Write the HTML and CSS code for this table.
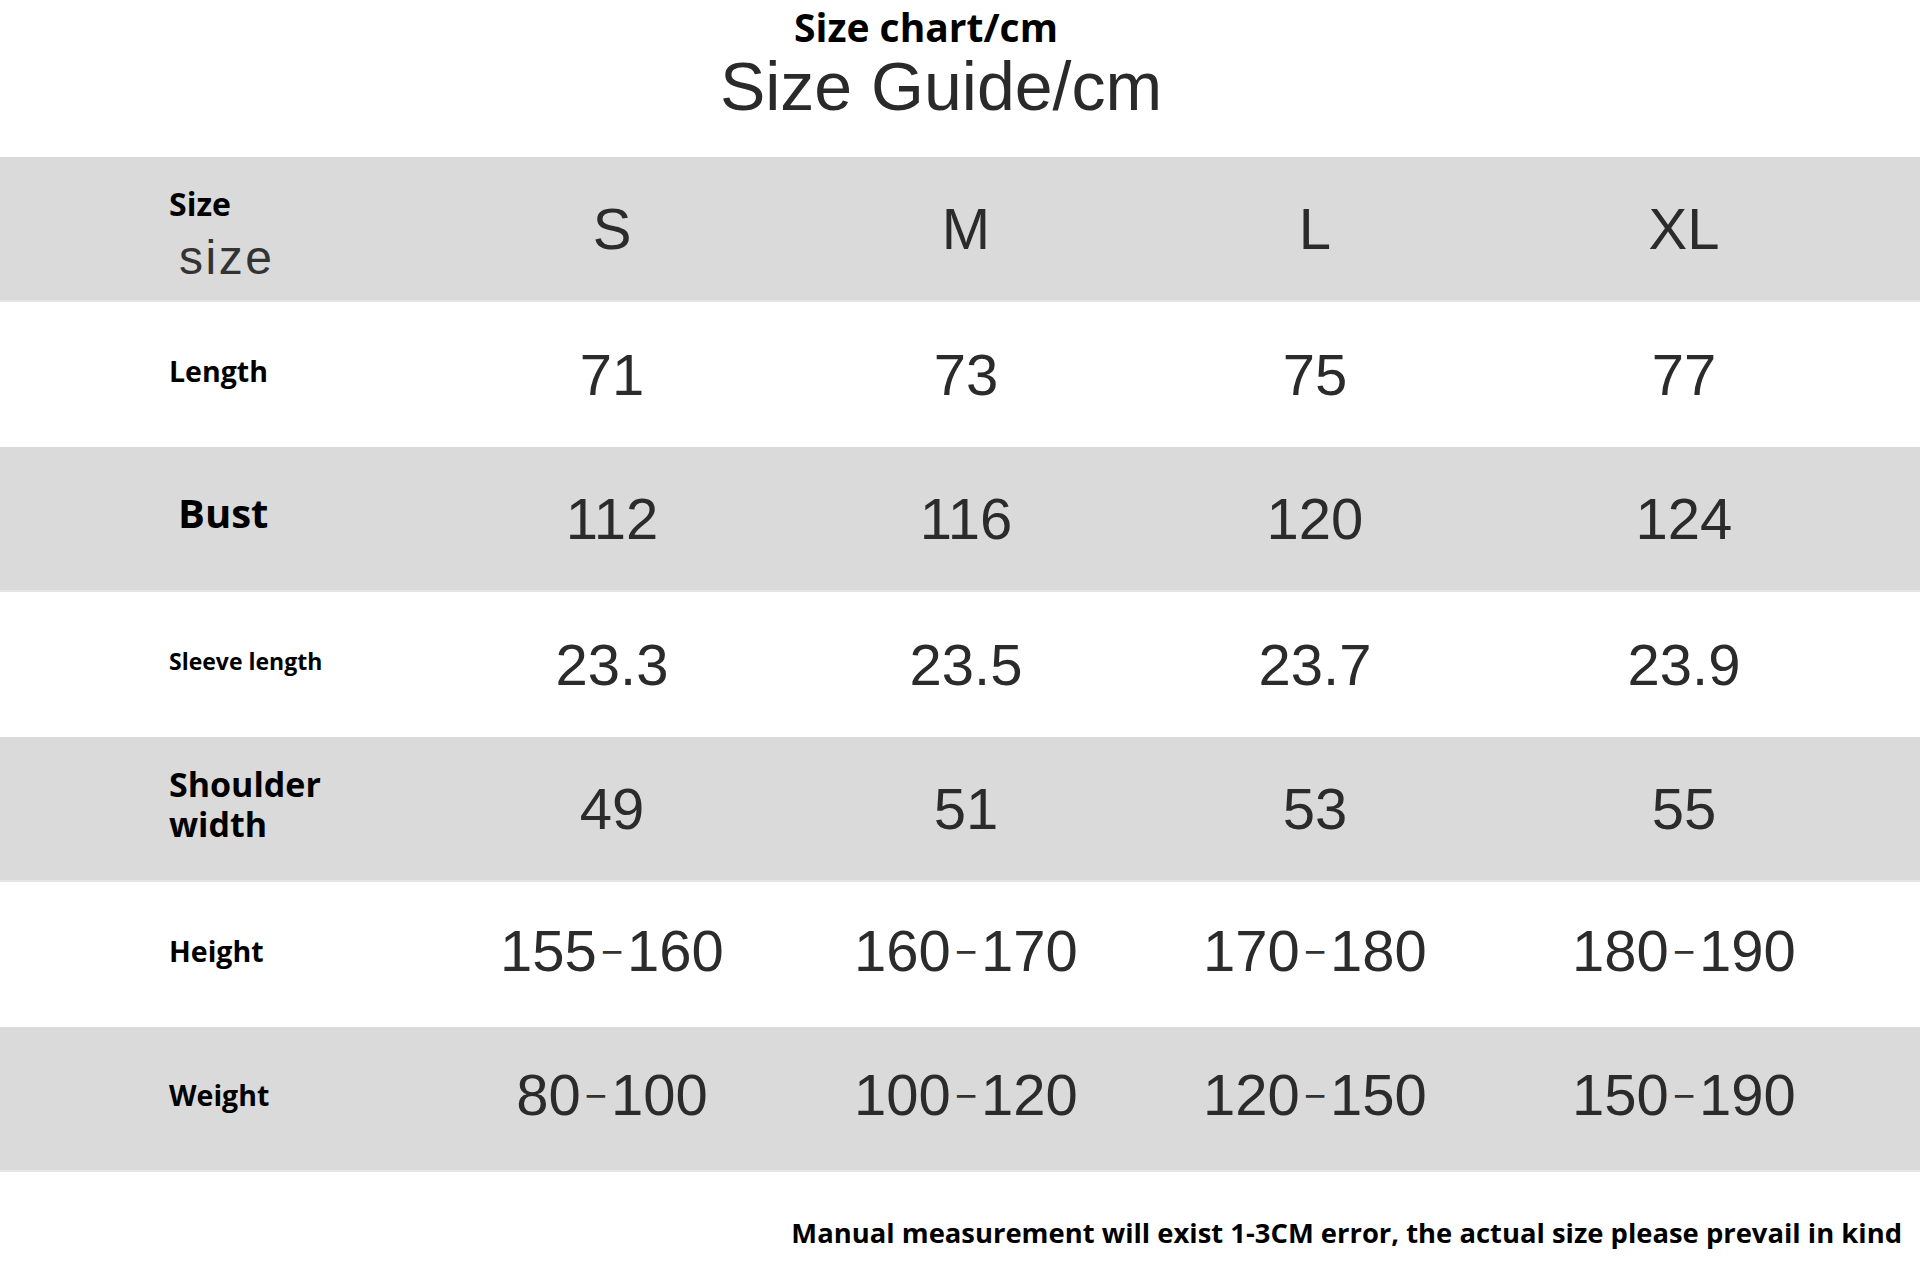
FILE: index.html
```html
<!DOCTYPE html>
<html lang="en">
<head>
<meta charset="utf-8">
<title>Size Guide</title>
<link rel="stylesheet" href="styles.css">
</head>
<body>
<div class="page">
  <header class="head">
    <div class="title-cn">Size chart/cm</div>
    <div class="title-en">Size Guide/cm</div>
  </header>
  <div class="chart">
    <div class="row gray">
      <div class="label label-size"><span class="size-b">Size</span><span class="size-r">size</span></div>
      <div class="val">S</div><div class="val">M</div><div class="val">L</div><div class="val">XL</div>
    </div>
    <div class="row">
      <div class="label fs-md">Length</div>
      <div class="val">71</div><div class="val">73</div><div class="val">75</div><div class="val">77</div>
    </div>
    <div class="row gray">
      <div class="label fs-lg">Bust</div>
      <div class="val">112</div><div class="val">116</div><div class="val">120</div><div class="val">124</div>
    </div>
    <div class="row">
      <div class="label fs-sm">Sleeve length</div>
      <div class="val">23.3</div><div class="val">23.5</div><div class="val">23.7</div><div class="val">23.9</div>
    </div>
    <div class="row gray">
      <div class="label fs-two"><span class="line">Shoulder</span><span class="line">width</span></div>
      <div class="val">49</div><div class="val">51</div><div class="val">53</div><div class="val">55</div>
    </div>
    <div class="row">
      <div class="label fs-md">Height</div>
      <div class="val">155<span class="dash">−</span>160</div><div class="val">160<span class="dash">−</span>170</div><div class="val">170<span class="dash">−</span>180</div><div class="val">180<span class="dash">−</span>190</div>
    </div>
    <div class="row gray">
      <div class="label fs-md">Weight</div>
      <div class="val">80<span class="dash">−</span>100</div><div class="val">100<span class="dash">−</span>120</div><div class="val">120<span class="dash">−</span>150</div><div class="val">150<span class="dash">−</span>190</div>
    </div>
  </div>
  <footer class="note">Manual measurement will exist 1-3CM error, the actual size please prevail in kind</footer>
</div>
</body>
</html>
```

FILE: styles.css
```css
html, body {
  margin: 0;
  padding: 0;
  background: #ffffff;
}
.page {
  width: 1920px;
  height: 1264px;
  overflow: hidden;
  display: flex;
  flex-direction: column;
}
.head {
  display: flex;
  flex-direction: column;
  align-items: center;
  height: 157px;
}
.title-cn {
  font-family: "Open Sans", "Noto Sans", sans-serif;
  font-weight: 700;
  font-size: 39px;
  line-height: 54px;
  color: #000;
  margin-right: 68px;
}
.title-en {
  font-family: "Liberation Sans", Arial, sans-serif;
  font-size: 68px;
  line-height: 80px;
  color: #2a2a2a;
  margin-right: 38px;
  margin-top: -8px;
}
.chart {
  display: flex;
  flex-direction: column;
}
.row {
  display: grid;
  grid-template-columns: 440px 344px 364px 334px 404px 1fr;
  height: 145px;
  align-items: center;
  box-sizing: border-box;
  background: #ffffff;
}
.row.gray {
  background: #dadada;
  border-bottom: 2px solid #e6e6e6;
}
.label {
  font-family: "Open Sans", "Noto Sans", sans-serif;
  font-weight: 700;
  color: #000;
  padding-left: 169px;
  padding-bottom: 8px;
}
.label-size {
  display: flex;
  flex-direction: column;
  padding-bottom: 0;
  padding-top: 16px;
}
.size-b {
  font-size: 32px;
  line-height: 38px;
}
.size-r {
  font-family: "Liberation Sans", Arial, sans-serif;
  font-weight: 400;
  font-size: 48px;
  line-height: 62px;
  letter-spacing: 2.5px;
  color: #333;
  padding-left: 10px;
  margin-top: 4px;
}
.fs-sm { font-size: 23px; line-height: 32px; }
.fs-md { font-size: 28.5px; line-height: 36px; }
.fs-lg { font-size: 40px; line-height: 48px; padding-left: 178px; padding-bottom: 12px; }
.fs-two {
  font-size: 34px;
  line-height: 40px;
  padding-bottom: 10px;
  display: flex;
  flex-direction: column;
}
.val {
  font-family: "Liberation Sans", Arial, sans-serif;
  font-size: 58px;
  line-height: 66px;
  color: #2b2b2b;
  text-align: center;
}
.dash {
  display: inline-block;
  font-size: 38px;
  color: #333;
  margin: 0 4px;
  transform: translateY(-6px);
}
.note {
  font-family: "Open Sans", "Noto Sans", sans-serif;
  font-weight: 700;
  font-size: 27.4px;
  line-height: 38px;
  color: #000;
  text-align: right;
  padding-right: 18px;
  padding-top: 42px;
}
```
